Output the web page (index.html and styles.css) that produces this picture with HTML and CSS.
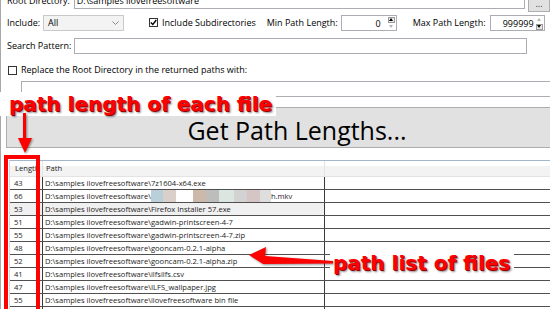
FILE: index.html
```html
<!DOCTYPE html>
<html lang="en">
<head>
    <meta charset="UTF-8">
    <meta name="viewport" content="width=device-width, initial-scale=1.0">
    <title>Path Length Checker</title>
    <link rel="stylesheet" href="styles.css">
</head>
<body>
    <div class="window">
        <div class="row row-root">
            <label class="lbl lbl-wide">Root Directory:</label>
            <div class="textbox textbox-root">D:\samples ilovefreesoftware</div>
            <div class="browse">...</div>
        </div>

        <div class="row row-include">
            <label class="lbl lbl-short">Include:</label>
            <div class="combo">
                <span>All</span>
                <svg width="7" height="4" viewBox="0 0 7 4"><polyline points="0.5,0.5 3.5,3.5 6.5,0.5" fill="none" stroke="#8a8a8a" stroke-width="1"/></svg>
            </div>
            <span class="check">
                <svg width="7" height="7" viewBox="0 0 7 7"><path d="M0.8 3.4 L2.8 5.4 L6.3 1" fill="none" stroke="#000" stroke-width="1.4"/></svg>
            </span>
            <span class="lbl check-label">Include Subdirectories</span>
            <span class="lbl lbl-min">Min Path Length:</span>
            <div class="spin spin-min">
                <span class="spin-val">0</span>
                <span class="spin-btns"><i class="up on"></i><i class="down"></i></span>
            </div>
            <span class="lbl lbl-max">Max Path Length:</span>
            <div class="spin spin-max">
                <span class="spin-val">999999</span>
                <span class="spin-btns"><i class="up"></i><i class="down on"></i></span>
            </div>
        </div>

        <div class="row row-search">
            <label class="lbl lbl-wide">Search Pattern:</label>
            <div class="textbox textbox-search"></div>
        </div>

        <div class="row row-replace">
            <span class="check"></span>
            <span class="lbl check-label">Replace the Root Directory in the returned paths with:</span>
        </div>
        <div class="textbox textbox-replace"></div>

        <button class="run-btn">Get Path Lengths...</button>

        <div class="list">
            <div class="list-head">
                <div class="c-len">Length</div>
                <div class="c-path">Path</div>
                <div class="c-rest"></div>
            </div>
            <div class="list-row"><div class="c-len">43</div><div class="c-path">D:\samples ilovefreesoftware\7z1604-x64.exe</div><div class="c-rest"></div></div>
            <div class="list-row"><div class="c-len">66</div><div class="c-path">D:\samples ilovefreesoftware\<span class="px" style="width:12px;background:#b9cfd9"></span><span class="px" style="width:13px;background:#d9d0c9"></span><span class="px" style="width:17px;background:#fff"></span><span class="px" style="width:13px;background:#cdb9a9"></span><span class="px" style="width:13px;background:#bdbdbb"></span><span class="px" style="width:15px;background:#dce6e1"></span><span class="px" style="width:13px;background:#d2d2d2"></span><span class="px" style="width:13px;background:#d6c5c5"></span><span class="px" style="width:11px;background:#dedede"></span>h.mkv</div><div class="c-rest"></div></div>
            <div class="list-row selected"><div class="c-len">53</div><div class="c-path">D:\samples ilovefreesoftware\Firefox Installer 57.exe</div><div class="c-rest"></div></div>
            <div class="list-row"><div class="c-len">51</div><div class="c-path">D:\samples ilovefreesoftware\gadwin-printscreen-4-7</div><div class="c-rest"></div></div>
            <div class="list-row"><div class="c-len">55</div><div class="c-path">D:\samples ilovefreesoftware\gadwin-printscreen-4-7.zip</div><div class="c-rest"></div></div>
            <div class="list-row"><div class="c-len">48</div><div class="c-path">D:\samples ilovefreesoftware\gooncam-0.2.1-alpha</div><div class="c-rest"></div></div>
            <div class="list-row"><div class="c-len">52</div><div class="c-path">D:\samples ilovefreesoftware\gooncam-0.2.1-alpha.zip</div><div class="c-rest"></div></div>
            <div class="list-row"><div class="c-len">41</div><div class="c-path">D:\samples ilovefreesoftware\ilfsilfs.csv</div><div class="c-rest"></div></div>
            <div class="list-row"><div class="c-len">47</div><div class="c-path">D:\samples ilovefreesoftware\ILFS_wallpaper.jpg</div><div class="c-rest"></div></div>
            <div class="list-row"><div class="c-len">55</div><div class="c-path">D:\samples ilovefreesoftware\ilovefreesoftware bin file</div><div class="c-rest"></div></div>
            <div class="list-row"><div class="c-len"></div><div class="c-path"></div><div class="c-rest"></div></div>
        </div>
    </div>

    <!-- annotations drawn over the screenshot -->
    <div class="note note-top">path length of each file</div>
    <div class="note note-bottom">path list of files</div>
    <div class="redbox"></div>
    <svg class="arrows" width="550" height="309" viewBox="0 0 550 309">
        <polygon points="23,113 26,113 26,138 32,138 25,153 18,138 23,138" fill="#f00"/>
        <polygon points="249,255 266,247 265,256 333,261 333,263.5 263,264" fill="#f00"/>
    </svg>
</body>
</html>
```

FILE: styles.css
```css
* {
    margin: 0;
    padding: 0;
    box-sizing: border-box;
}

body {
    font-family: "Open Sans", "Noto Sans", sans-serif;
    font-size: 9px;
    color: #000;
    background-color: #fff;
    width: 550px;
    height: 309px;
    overflow: hidden;
    position: relative;
}

.window {
    border-left: 1px solid #a8a8a8;
    padding-left: 6px;
    height: 309px;
    overflow: hidden;
}

.row {
    display: flex;
    align-items: center;
}

.lbl {
    white-space: nowrap;
    line-height: 12px;
}

.lbl-wide {
    width: 67px;
}

.lbl-short {
    width: 36px;
}

.textbox {
    height: 16px;
    border: 1px solid #abadb3;
    background-color: #fff;
    padding-left: 2px;
    line-height: 14px;
    white-space: nowrap;
}

/* top row is partly scrolled out of view */
.row-root {
    margin-top: -8px;
    height: 20px;
    align-items: flex-start;
}

.row-root .lbl {
    margin-top: 3px;
}

.textbox-root {
    width: 453px;
    margin-top: 1px;
}

.browse {
    width: 22px;
    height: 20px;
    margin-left: 3px;
    border: 1px solid #adadad;
    background-color: #e1e1e1;
    font-size: 9px;
    line-height: 8px;
    color: #333;
    display: flex;
    align-items: flex-end;
    justify-content: center;
    padding-bottom: 3px;
}

.row-include {
    margin-top: 2px;
    height: 17px;
}

.combo {
    width: 81px;
    height: 16px;
    border: 1px solid #c9c9c9;
    background-color: #f3f3f3;
    display: flex;
    align-items: center;
    justify-content: space-between;
    padding: 0 4px;
}

.check {
    width: 9px;
    height: 9px;
    border: 1px solid #333;
    background-color: #fff;
    display: inline-flex;
    align-items: center;
    justify-content: center;
    flex-shrink: 0;
}

.row-include .check {
    margin-left: 25px;
}

.check-label {
    margin-left: 4px;
}

.lbl-min {
    margin-left: 11px;
}

.lbl-max {
    margin-left: 16px;
}

.spin {
    height: 16px;
    border: 1px solid #abadb3;
    display: flex;
    align-items: center;
    justify-content: flex-end;
    margin-top: 1px;
}

.spin-min {
    width: 56px;
    margin-left: 3px;
}

.spin-min .spin-val {
    margin-right: 7px;
}

.spin-max {
    width: 55px;
    margin-left: 4px;
}

.spin-max .spin-val {
    margin-right: 2px;
}

.spin-btns {
    display: flex;
    flex-direction: column;
    gap: 1px;
    margin-right: 1px;
}

.spin-btns i {
    width: 7px;
    height: 6px;
    display: flex;
    align-items: center;
    justify-content: center;
    border: 1px solid transparent;
}

.spin-btns i::after {
    content: "";
    border-left: 2.5px solid transparent;
    border-right: 2.5px solid transparent;
}

.spin-btns .up::after {
    border-bottom: 3px solid #b5b5b5;
}

.spin-btns .down::after {
    border-top: 3px solid #b5b5b5;
}

.spin-btns .on {
    border-color: #9a9a9a;
    background-color: #e9e9e9;
}

.spin-btns .up.on::after {
    border-bottom-color: #000;
}

.spin-btns .down.on::after {
    border-top-color: #000;
}

.row-search {
    margin-top: 7px;
    height: 16px;
}

.textbox-search {
    width: 453px;
}

.row-replace {
    margin-top: 8px;
    height: 16px;
}

.row-replace .check {
    margin-left: 1px;
}

.textbox-replace {
    margin-top: 3px;
    margin-left: 14px;
    width: 560px;
}

.run-btn {
    display: block;
    margin-top: 10px;
    margin-left: -1px;
    width: 582px;
    height: 41px;
    border: 1px solid #adadad;
    background-color: #e1e1e1;
    font-family: "Open Sans", sans-serif;
    font-size: 25px;
    line-height: 25px;
    padding: 6px 0 0;
    text-align: center;
    color: #000;
}

.list {
    margin-top: 12px;
    margin-left: 2px;
    width: 560px;
    border-top: 1px solid #a3b6cc;
    border-left: 1px solid #d9d9d9;
    font-size: 7.6px;
    color: #1e1e1e;
}

.list-head,
.list-row {
    display: grid;
    grid-template-columns: 33px 282px 1fr;
}

.list-head {
    height: 16px;
    border-bottom: 1px solid #e3e3e3;
    background: linear-gradient(#fff 0 35%, #f3f3f3 35%);
    color: #222;
}

.list-head > div {
    border-right: 1px solid #e3e3e3;
    line-height: 15px;
    white-space: nowrap;
    overflow: hidden;
}

.list-head .c-len {
    padding-left: 5px;
}

.list-head .c-path {
    padding-left: 3px;
}

.list-row {
    height: 13px;
    border-bottom: 1px solid #505050;
}

.list-row > div {
    border-right: 1px solid #3a3a3a;
    line-height: 12px;
    white-space: nowrap;
    overflow: hidden;
}

.list-row .c-len {
    padding-left: 4px;
}

.list-row .c-path {
    padding-left: 2px;
}

.list-row.selected .c-len,
.list-row.selected .c-path {
    background-color: #f0f0f0;
}

.px {
    display: inline-block;
    height: 12px;
    vertical-align: top;
}

/* annotations */
.note {
    position: absolute;
    font-family: "DejaVu Sans", Verdana, sans-serif;
    font-weight: bold;
    font-size: 20px;
    line-height: 24px;
    color: #f00;
    background-color: #fff;
    white-space: nowrap;
    text-shadow: 1px 1px 0 #9a0000, 2px 2px 2px rgba(0, 0, 0, 0.45);
}

.note-top {
    left: 0;
    top: 92px;
    padding: 0 4px 0 9px;
}

.note-bottom {
    left: 330px;
    top: 251px;
    padding: 0 4px 4px 3px;
}

.redbox {
    position: absolute;
    left: 4px;
    top: 155px;
    width: 36px;
    height: 170px;
    border: 4px solid #f00;
}

.arrows {
    position: absolute;
    left: 0;
    top: 0;
    filter: drop-shadow(1px 1px 1px rgba(0, 0, 0, 0.45));
}
```
